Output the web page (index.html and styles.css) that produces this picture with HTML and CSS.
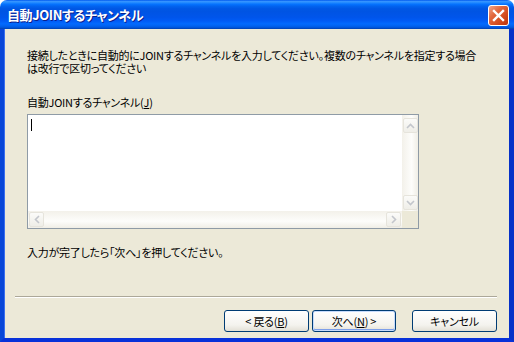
FILE: index.html
```html
<!DOCTYPE html>
<html lang="ja">
<head>
  <meta charset="UTF-8" />
  <title>自動JOINするチャンネル</title>
  <link rel="stylesheet" href="styles.css">
</head>
<body>

  <div class="ventana">
    <!-- Barra de título -->
    <div class="titulo">
      <span class="titulo-texto">自動JOINするチャンネル</span>
      <button type="button" class="cerrar" aria-label="閉じる">
        <svg width="13" height="13" viewBox="0 0 13 13">
          <path d="M2 2 L11 11 M11 2 L2 11" stroke="#fff" stroke-width="2.4" stroke-linecap="square"/>
        </svg>
      </button>
    </div>

    <!-- Área cliente -->
    <div class="cliente">
      <div class="contenido">
        <p class="intro">接続したときに自動的にJOINするチャンネルを入力してください。複数のチャンネルを指定する場合<br>は改行で区切ってください</p>

        <label class="etiqueta" for="canales">自動JOINするチャンネル(<u>J</u>)</label>

        <div class="caja" id="canales">
          <div class="texto"><span class="cursor"></span></div>
          <div class="vscroll">
            <span class="flecha"><svg width="9" height="6" viewBox="0 0 9 6"><path d="M1 5 L4.5 1.5 L8 5" fill="none" stroke="#c3c6cc" stroke-width="1.6"/></svg></span>
            <span class="flecha"><svg width="9" height="6" viewBox="0 0 9 6"><path d="M1 1 L4.5 4.5 L8 1" fill="none" stroke="#c3c6cc" stroke-width="1.6"/></svg></span>
          </div>
          <div class="hscroll">
            <span class="flecha"><svg width="6" height="9" viewBox="0 0 6 9"><path d="M5 1 L1.5 4.5 L5 8" fill="none" stroke="#c3c6cc" stroke-width="1.6"/></svg></span>
            <span class="flecha"><svg width="6" height="9" viewBox="0 0 6 9"><path d="M1 1 L4.5 4.5 L1 8" fill="none" stroke="#c3c6cc" stroke-width="1.6"/></svg></span>
          </div>
          <div class="esquina"></div>
        </div>

        <p class="aviso">入力が完了したら「次へ」を押してください。</p>
      </div>

      <hr class="separador">

      <!-- Botones -->
      <div class="botones">
        <button type="button">&lt; 戻る(<u>B</u>)</button>
        <button type="button" class="defecto">次へ(<u>N</u>) &gt;</button>
        <button type="button" class="cancelar">キャンセル</button>
      </div>
    </div>
  </div>

</body>
</html>
```

FILE: styles.css
```css
/* Base */
* { box-sizing: border-box; margin: 0; padding: 0; }
body {
  background: #fff;
  font-family: "Noto Sans CJK JP", "Noto Sans", sans-serif;
  font-size: 11px;
  letter-spacing: -0.25px;
  font-feature-settings: "palt";
  color: #000;
}

/* Ventana estilo XP */
.ventana {
  width: 514px;
  height: 342px;
  display: flex;
  flex-direction: column;
  border-radius: 7px 7px 0 0;
  overflow: hidden;
}

.titulo {
  height: 29px;
  flex: none;
  display: flex;
  justify-content: space-between;
  align-items: flex-start;
  padding: 0 5px 0 7px;
  background: linear-gradient(to bottom,
    #0058ee 0%, #3593ff 5%, #288eff 8%, #127dff 12%, #036ffc 16%,
    #0262ee 22%, #0057e5 30%, #0054e3 40%, #0055eb 60%, #005bf5 72%,
    #026afe 82%, #0062ef 90%, #0052d6 96%, #0040ab 100%);
}
.titulo-texto {
  margin-top: 7px;
  color: #fff;
  font-weight: bold;
  font-size: 13px;
  line-height: 15px;
  letter-spacing: -0.4px;
  text-shadow: 1px 1px 0 #0a1e8c;
}
.cerrar {
  margin-top: 5px;
  width: 21px;
  height: 21px;
  border: 1px solid #fff;
  border-radius: 3px;
  background: linear-gradient(135deg, #f0a58a 0%, #e2683e 35%, #d14a1d 70%, #b8330c 100%);
  display: flex;
  align-items: center;
  justify-content: center;
}

.cliente {
  flex: 1;
  display: flex;
  flex-direction: column;
  background: #ece9d8;
  border-left: 4px solid #0846d8;
  border-right: 5px solid #0631c8;
  border-bottom: 4px solid #0831d9;
  box-shadow: inset 1px 0 0 #3a6ff0;
}

.contenido {
  padding: 20px 0 0 23px;
  line-height: 12px;
}
.intro {
  line-height: 13px;
  white-space: nowrap;
}
.etiqueta {
  display: block;
  margin-top: 21px;
}

/* Caja de texto con barras deshabilitadas */
.caja {
  margin-top: 6px;
  width: 392px;
  height: 115px;
  border: 1px solid #8f9ba6;
  background: #fff;
  display: grid;
  grid-template-columns: 1fr 16px;
  grid-template-rows: 1fr 17px;
}
.texto { padding: 4px 0 0 3px; }
.cursor {
  display: block;
  width: 1px;
  height: 12px;
  background: #000;
}
.vscroll {
  display: flex;
  flex-direction: column;
  justify-content: space-between;
  align-items: center;
  padding: 3px 0 1px;
  background: linear-gradient(to right, #f3f1ea, #fdfdfb 60%, #f0eee6);
}
.hscroll {
  display: flex;
  justify-content: space-between;
  align-items: center;
  padding: 0 1px;
  background: linear-gradient(to bottom, #f3f1ea, #fdfdfb 60%, #f0eee6);
}
.flecha {
  width: 15px;
  height: 15px;
  border: 1px solid #e6e4dc;
  border-radius: 2px;
  background: linear-gradient(#fbfbf9, #efeee8);
  display: flex;
  align-items: center;
  justify-content: center;
}
.esquina { background: #ece9d8; }

.aviso { margin-top: 17px; }

.separador {
  margin: 38px 12px 0 11px;
  border: none;
  border-top: 1px solid #aca899;
  border-bottom: 1px solid #fff;
}

/* Botones */
.botones {
  display: flex;
  justify-content: flex-end;
  gap: 3px;
  margin: 12px 12px 0 0;
}
.botones button {
  width: 85px;
  height: 22px;
  font-family: inherit;
  font-size: 11px;
  letter-spacing: -0.25px;
  font-feature-settings: "palt";
  color: #000;
  border: 1px solid #003c74;
  border-radius: 3px;
  background: linear-gradient(#ffffff, #f4f3ee 70%, #e3e0d6);
}
.botones .defecto {
  width: 84px;
  box-shadow: inset 0 0 0 1px #c6dbfc, inset 0 -1px 0 1px #7e9fe9;
}
.botones .cancelar { margin-left: 13px; }
```
